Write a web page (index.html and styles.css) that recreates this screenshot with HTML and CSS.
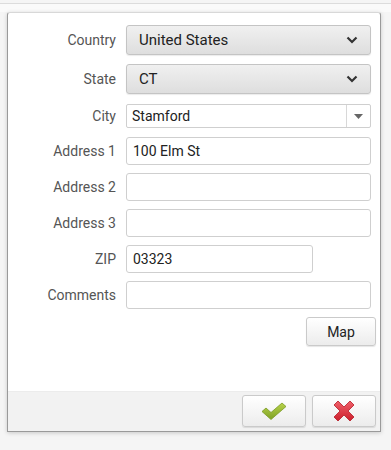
FILE: index.html
```html
<!DOCTYPE html>
<html lang="en">
<head>
  <meta charset="UTF-8" />
  <meta name="viewport" content="width=device-width, initial-scale=1.0"/>
  <title>Address</title>
  <link rel="stylesheet" href="styles.css">
</head>
<body>

  <div class="backdrop">
    <div class="dialog">
      <div class="dialog-body">

        <div class="row">
          <label>Country</label>
          <div class="select">
            <span>United States</span>
            <svg class="chev" width="12" height="8" viewBox="0 0 12 8"><path d="M1.5 1.5 L6 6 L10.5 1.5" fill="none" stroke="#333" stroke-width="2.2"/></svg>
          </div>
        </div>

        <div class="row">
          <label>State</label>
          <div class="select">
            <span>CT</span>
            <svg class="chev" width="12" height="8" viewBox="0 0 12 8"><path d="M1.5 1.5 L6 6 L10.5 1.5" fill="none" stroke="#333" stroke-width="2.2"/></svg>
          </div>
        </div>

        <div class="row row-city">
          <label>City</label>
          <div class="combo">
            <span class="combo-text">Stamford</span>
            <span class="combo-btn"><svg width="9" height="5" viewBox="0 0 9 5"><path d="M0 0 H9 L4.5 5 Z" fill="#666"/></svg></span>
          </div>
        </div>

        <div class="row">
          <label>Address 1</label>
          <div class="input">100 Elm St</div>
        </div>

        <div class="row">
          <label>Address 2</label>
          <div class="input"></div>
        </div>

        <div class="row">
          <label>Address 3</label>
          <div class="input"></div>
        </div>

        <div class="row">
          <label>ZIP</label>
          <div class="input input-zip">03323</div>
        </div>

        <div class="row">
          <label>Comments</label>
          <div class="input"></div>
        </div>

        <div class="map-row">
          <button class="btn btn-map">Map</button>
        </div>

      </div>

      <div class="dialog-footer">
        <button class="btn btn-icon" title="OK">
          <svg width="26" height="20" viewBox="0 0 26 20">
            <defs>
              <linearGradient id="g-ok" x1="0" y1="0" x2="0" y2="1">
                <stop offset="0" stop-color="#b8d24a"/>
                <stop offset="1" stop-color="#7fa226"/>
              </linearGradient>
            </defs>
            <path d="M1 10.5 L5 7 L10 11.5 L21 2 L25 5.5 L10 18.5 Z" fill="url(#g-ok)" stroke="#7a9a22" stroke-width="0.8" stroke-linejoin="round"/>
          </svg>
        </button>
        <button class="btn btn-icon" title="Cancel">
          <svg width="24" height="24" viewBox="0 0 24 24">
            <defs>
              <linearGradient id="g-no" x1="0" y1="0" x2="0" y2="1">
                <stop offset="0" stop-color="#f0606a"/>
                <stop offset="1" stop-color="#cc1f2c"/>
              </linearGradient>
            </defs>
            <path d="M2 6 L6 2 L12 8 L18 2 L22 6 L16 12 L22 18 L18 22 L12 16 L6 22 L2 18 L8 12 Z" fill="url(#g-no)" stroke="#b51a26" stroke-width="0.8" stroke-linejoin="round"/>
          </svg>
        </button>
      </div>
    </div>
  </div>

</body>
</html>
```

FILE: styles.css
```css
body {
  margin: 0;
  background-color: #f5f5f5;
  font-family: Roboto, 'Liberation Sans', sans-serif;
  font-size: 14px;
  color: #222;
}

.backdrop {
  height: 450px;
  padding: 12px 0 0 7px;
  box-sizing: border-box;
  background: linear-gradient(#f5f5f5 0, #f5f5f5 3px, #dcdcdc 3px, #dcdcdc 4px, #fafafa 4px, #fafafa 12px, #f5f5f5 12px);
}

.dialog {
  width: 374px;
  height: 420px;
  box-sizing: border-box;
  background: white;
  border: 1px solid #9a9a9a;
  border-top-color: #d8d8d8;
  border-radius: 3px 3px 0 0;
  box-shadow: 0 1px 4px rgba(0, 0, 0, 0.18);
  display: flex;
  flex-direction: column;
}

.dialog-body {
  flex: 1;
  padding: 12px 4px 0 0;
}

.row {
  display: flex;
  align-items: center;
  margin-bottom: 8px;
}

.row label {
  width: 108px;
  padding-right: 10px;
  text-align: right;
  color: #555;
  flex-shrink: 0;
}

.select {
  flex: 1;
  height: 30px;
  box-sizing: border-box;
  margin-right: 5px;
  padding: 0 12px;
  border: 1px solid #c4c4c4;
  border-radius: 3px;
  background: linear-gradient(#f0f0f0, #dedede);
  display: flex;
  align-items: center;
  justify-content: space-between;
  font-size: 15px;
  box-shadow: 0 1px 1px rgba(0, 0, 0, 0.08);
}

.row:nth-child(1) {
  margin-bottom: 9px;
}

.row:nth-child(2) {
  margin-bottom: 10px;
}

.row-city {
  margin-bottom: 9px;
}

.combo {
  flex: 1;
  height: 24px;
  box-sizing: border-box;
  margin-right: 5px;
  border: 1px solid #cfcfcf;
  border-radius: 2px;
  display: flex;
  align-items: center;
}

.combo-text {
  flex: 1;
  padding-left: 5px;
}

.combo-btn {
  width: 23px;
  height: 100%;
  border-left: 1px solid #d8d8d8;
  display: flex;
  align-items: center;
  justify-content: center;
}

.input {
  flex: 1;
  height: 28px;
  box-sizing: border-box;
  margin-right: 5px;
  padding: 0 6px;
  border: 1px solid #cfcfcf;
  border-radius: 3px;
  display: flex;
  align-items: center;
}

.input-zip {
  flex: 0 0 187px;
}

.map-row {
  display: flex;
  justify-content: flex-end;
}

.btn {
  font-family: inherit;
  font-size: 14px;
  color: #222;
  border: 1px solid #cacaca;
  border-radius: 3px;
  background: linear-gradient(#ffffff, #ececec);
  box-shadow: 0 1px 1px rgba(0, 0, 0, 0.1);
  padding: 0;
  cursor: pointer;
}

.btn-map {
  width: 70px;
  height: 29px;
}

.dialog-footer {
  height: 40px;
  background-color: #f2f2f2;
  border-top: 1px solid #ececec;
  display: flex;
  justify-content: flex-end;
  align-items: flex-start;
  gap: 6px;
  padding: 3px 4px 0 0;
  box-sizing: border-box;
}

.btn-icon {
  width: 64px;
  height: 32px;
  display: flex;
  align-items: center;
  justify-content: center;
}
```
